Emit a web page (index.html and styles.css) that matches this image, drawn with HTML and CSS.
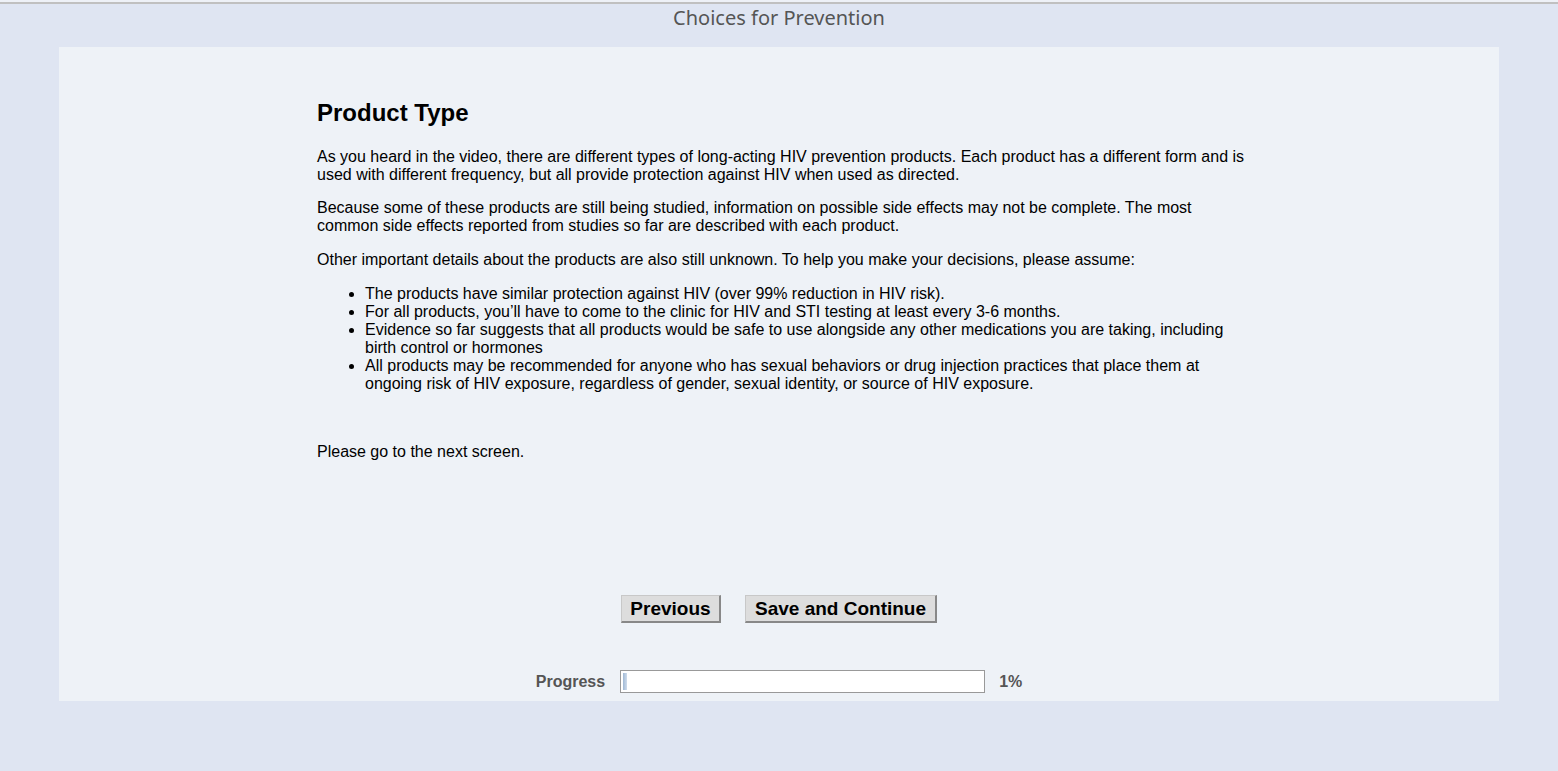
FILE: index.html
```html
<!DOCTYPE html>
<html>
<head>
<meta charset="utf-8">
<title>Choices for Prevention</title>
<link rel="stylesheet" href="styles.css">
</head>
<body>
<div class="topline"></div>
<header class="site-header">Choices for Prevention</header>
<main class="panel">
  <div class="content">
    <h2 class="title">Product Type</h2>
    <p>As you heard in the video, there are different types of long-acting HIV prevention products. Each product has a different form and is used with different frequency, but all provide protection against HIV when used as directed.</p>
    <p>Because some of these products are still being studied, information on possible side effects may not be complete. The most common side effects reported from studies so far are described with each product.</p>
    <p class="intro">Other important details about the products are also still unknown. To help you make your decisions, please assume:</p>
    <ul class="list">
      <li>The products have similar protection against HIV (over 99% reduction in HIV risk).</li>
      <li>For all products, you’ll have to come to the clinic for HIV and STI testing at least every 3-6 months.</li>
      <li>Evidence so far suggests that all products would be safe to use alongside any other medications you are taking, including birth control or hormones</li>
      <li>All products may be recommended for anyone who has sexual behaviors or drug injection practices that place them at ongoing risk of HIV exposure, regardless of gender, sexual identity, or source of HIV exposure.</li>
    </ul>
    <p class="next">Please go to the next screen.</p>
  </div>
  <div class="buttons">
    <button class="btn btn-prev">Previous</button>
    <button class="btn btn-save">Save and Continue</button>
  </div>
  <div class="progress">
    <span class="progress-label">Progress</span>
    <div class="progress-bar"><div class="progress-fill" style="width:1%"></div></div>
    <span class="progress-pct">1%</span>
  </div>
</main>
</body>
</html>
```

FILE: styles.css
```css
html, body {
  margin: 0;
  padding: 0;
}
body {
  background: #dfe5f2;
  font-family: "Liberation Sans", Arial, sans-serif;
  color: #000;
  height: 771px;
  overflow: hidden;
  border-top: 2px solid #eef1f7;
}
.topline {
  height: 2px;
  background: #c0c0c0;
}
.site-header {
  height: 43px;
  line-height: 28px;
  text-align: center;
  font-family: "Noto Sans", "DejaVu Sans", sans-serif;
  font-size: 20px;
  color: #555;
}
.panel {
  width: 1440px;
  margin: 0 auto;
  background: #eef2f7;
  padding: 53px 0 9px;
  box-sizing: border-box;
  height: 654px;
}
.content {
  width: 930px;
  margin: 0 0 0 258px;
  font-size: 16px;
  line-height: 18px;
}
.title {
  font-size: 24px;
  line-height: 26px;
  font-weight: bold;
  margin: 0 0 22px;
}
.content p {
  margin: 0 0 15px;
}
.content p.intro {
  margin-top: 16px;
}
.list {
  margin: 16px 0 0;
  padding-left: 48px;
}
.content p.next {
  margin: 50px 0 0;
}
.buttons {
  display: flex;
  justify-content: center;
  gap: 24px;
  margin-top: 134px;
}
.btn {
  font-family: "Liberation Sans", Arial, sans-serif;
  font-weight: bold;
  font-size: 19px;
  height: 28px;
  padding: 0 6px;
  background: #dddddd;
  border: 1px solid #c8c8c8;
  border-right: 2px solid #888;
  border-bottom: 2px solid #888;
  color: #000;
}
.btn-prev { width: 100px; }
.btn-save { width: 192px; }
.progress {
  display: flex;
  justify-content: center;
  align-items: center;
  margin-top: 47px;
  font-size: 16px;
  font-weight: bold;
  color: #555;
}
.progress-label { margin-right: 15px; }
.progress-bar {
  width: 365px;
  height: 23px;
  box-sizing: border-box;
  border: 1px solid #999;
  background: #fff;
  padding: 2px;
}
.progress-fill {
  height: 100%;
  min-width: 4px;
  background: linear-gradient(to right, #9fb8d4, #cfdcec);
}
.progress-pct { margin-left: 14px; }
```
